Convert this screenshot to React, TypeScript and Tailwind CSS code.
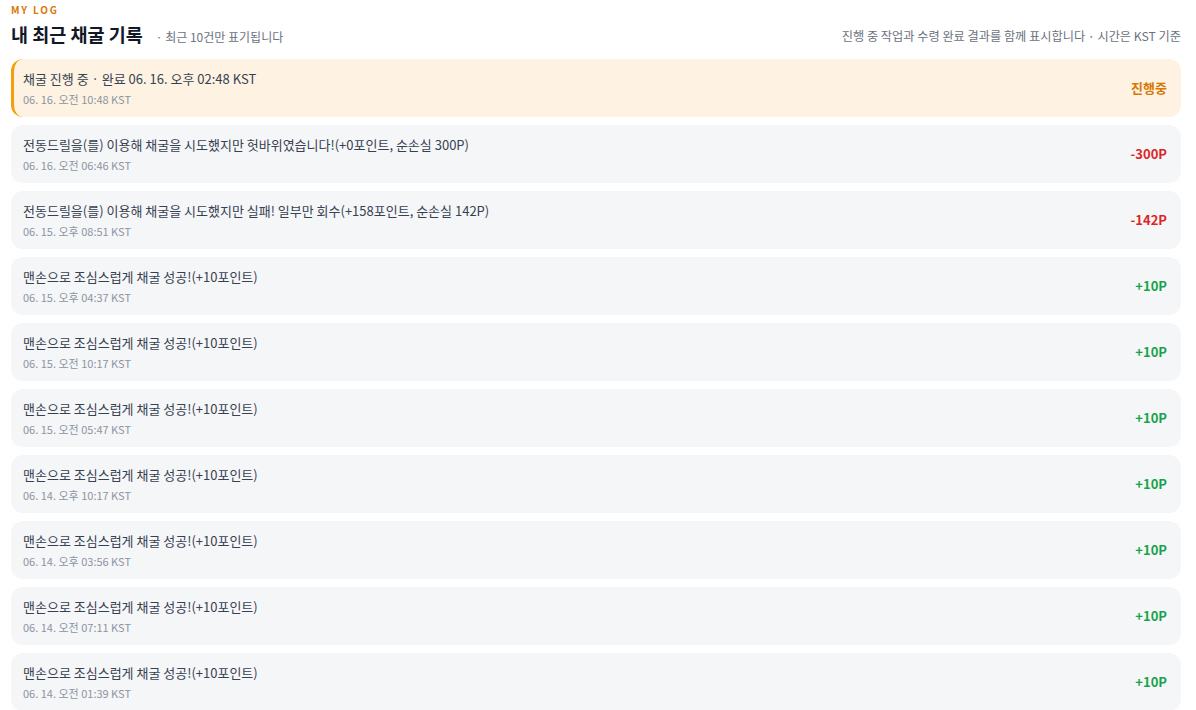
type Log = {
  title: string
  time: string
  amount: string
  kind: 'pending' | 'loss' | 'gain'
}

const logs: Log[] = [
  { title: '채굴 진행 중 · 완료 06. 16. 오후 02:48 KST', time: '06. 16. 오전 10:48 KST', amount: '진행중', kind: 'pending' },
  { title: '전동드릴을(를) 이용해 채굴을 시도했지만 헛바위였습니다!(+0포인트, 순손실 300P)', time: '06. 16. 오전 06:46 KST', amount: '-300P', kind: 'loss' },
  { title: '전동드릴을(를) 이용해 채굴을 시도했지만 실패! 일부만 회수(+158포인트, 순손실 142P)', time: '06. 15. 오후 08:51 KST', amount: '-142P', kind: 'loss' },
  { title: '맨손으로 조심스럽게 채굴 성공!(+10포인트)', time: '06. 15. 오후 04:37 KST', amount: '+10P', kind: 'gain' },
  { title: '맨손으로 조심스럽게 채굴 성공!(+10포인트)', time: '06. 15. 오전 10:17 KST', amount: '+10P', kind: 'gain' },
  { title: '맨손으로 조심스럽게 채굴 성공!(+10포인트)', time: '06. 15. 오전 05:47 KST', amount: '+10P', kind: 'gain' },
  { title: '맨손으로 조심스럽게 채굴 성공!(+10포인트)', time: '06. 14. 오후 10:17 KST', amount: '+10P', kind: 'gain' },
  { title: '맨손으로 조심스럽게 채굴 성공!(+10포인트)', time: '06. 14. 오후 03:56 KST', amount: '+10P', kind: 'gain' },
  { title: '맨손으로 조심스럽게 채굴 성공!(+10포인트)', time: '06. 14. 오전 07:11 KST', amount: '+10P', kind: 'gain' },
  { title: '맨손으로 조심스럽게 채굴 성공!(+10포인트)', time: '06. 14. 오전 01:39 KST', amount: '+10P', kind: 'gain' },
]

const amountColor = {
  pending: 'text-[#d97706]',
  loss: 'text-[#dc2626]',
  gain: 'text-[#16a34a]',
}

export default function App() {
  return (
    <div className="min-h-screen bg-white pl-[11px] pr-[15px] pt-[2px] font-['Noto_Sans_CJK_KR','Noto_Sans',sans-serif] text-[#1f2937]">
      {/* Header */}
      <div className="text-[10px] font-bold leading-[15px] tracking-[0.18em] text-[#d97706]">MY LOG</div>
      <div className="mt-[5px] flex items-end justify-between">
        <div className="flex items-baseline">
          <h2 className="text-[18.5px] font-bold leading-[25px] text-[#111827]">내 최근 채굴 기록</h2>
          <span className="ml-[13px] text-[12px] text-[#6b7280]">· 최근 10건만 표기됩니다</span>
        </div>
        <p className="pb-[2px] text-[12.2px] text-[#6b7280]">진행 중 작업과 수령 완료 결과를 함께 표시합니다 · 시간은 KST 기준</p>
      </div>

      {/* List */}
      <ul className="mt-[12px] flex flex-col gap-[8px]">
        {logs.map((log, i) => (
          <li
            key={i}
            className={`flex h-[58px] items-center justify-between rounded-[12px] pr-[14px] ${
              log.kind === 'pending'
                ? 'border-l-[3px] border-[#f59e0b] bg-[#fef3e2] pl-[9px]'
                : 'bg-[#f5f6f8] pl-[12px]'
            }`}
          >
            <div className="flex flex-col">
              <span className="text-[13px] leading-[20px] text-[#374151]">{log.title}</span>
              <span className="mt-[2px] text-[11px] leading-[16px] text-[#8b95a1]">{log.time}</span>
            </div>
            <span className={`text-[13px] font-bold ${amountColor[log.kind]}`}>{log.amount}</span>
          </li>
        ))}
      </ul>
    </div>
  )
}
